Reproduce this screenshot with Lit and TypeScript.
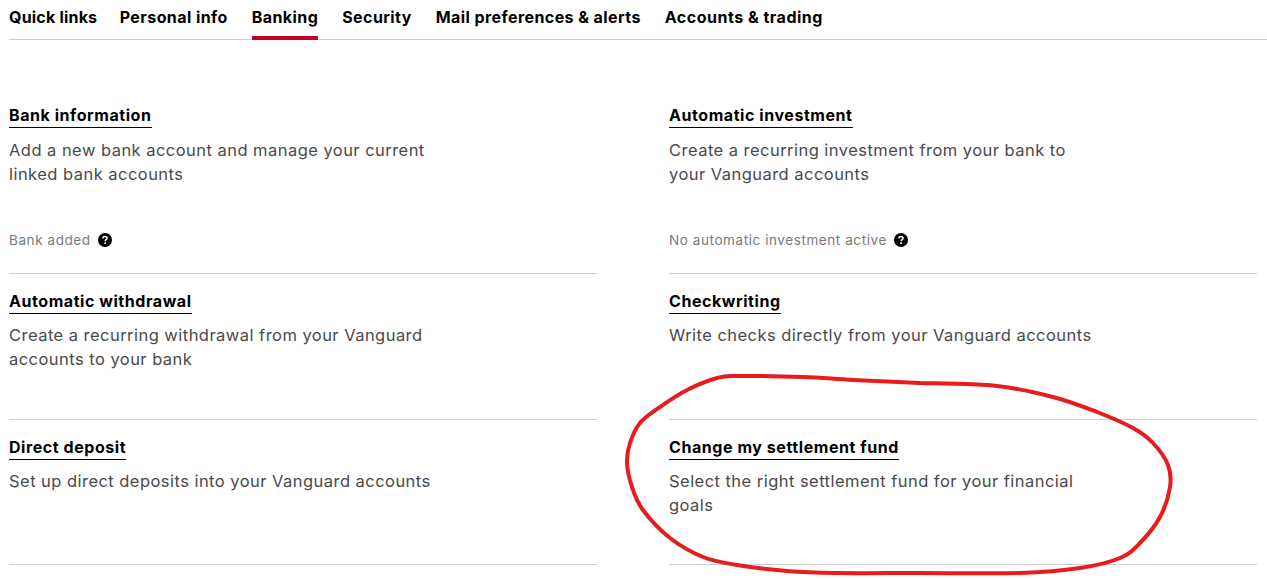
import { LitElement, html, css, svg } from "lit";
import { customElement } from "lit/decorators.js";

const TABS = ["Quick links", "Personal info", "Banking", "Security", "Mail preferences & alerts", "Accounts & trading"];

interface Card { title: string; lines: string[]; status?: string; }
const CARDS: Card[] = [
  { title: "Bank information", lines: ["Add a new bank account and manage your current", "linked bank accounts"], status: "Bank added" },
  { title: "Automatic investment", lines: ["Create a recurring investment from your bank to", "your Vanguard accounts"], status: "No automatic investment active" },
  { title: "Automatic withdrawal", lines: ["Create a recurring withdrawal from your Vanguard", "accounts to your bank"] },
  { title: "Checkwriting", lines: ["Write checks directly from your Vanguard accounts"] },
  { title: "Direct deposit", lines: ["Set up direct deposits into your Vanguard accounts"] },
  { title: "Change my settlement fund", lines: ["Select the right settlement fund for your financial", "goals"] },
];

const PTS: [number, number][] = [
  [920,383],[853,380],[803,377],[737,376],[717,378],[687,390],[660,407],[640,423],[630,443],[627,463],[632,487],[643,510],[670,538],[703,557],[737,565],[787,571],[837,573],[920,573],[1020,573],[1080,568],[1120,558],[1140,543],[1160,517],[1170,487],[1168,465],[1153,443],[1133,428],[1097,412],[1053,397],[997,386],[920,383],
];
function smooth(p: [number, number][]) {
  let d = `M${p[0][0]} ${p[0][1]}`;
  for (let i = 0; i < p.length - 1; i++) {
    const a = p[Math.max(0, i - 1)], b = p[i], c = p[i + 1], e = p[Math.min(p.length - 1, i + 2)];
    d += `C${b[0] + (c[0] - a[0]) / 6} ${b[1] + (c[1] - a[1]) / 6} ${c[0] - (e[0] - b[0]) / 6} ${c[1] - (e[1] - b[1]) / 6} ${c[0]} ${c[1]}`;
  }
  return d;
}

@customElement("app-root")
export class AppRoot extends LitElement {
  static styles = css`
    :host { display: block; position: relative; width: 1267px; height: 579px; overflow: hidden; background: #fff; font-family: "Inter", "Liberation Sans", sans-serif; color: #000; }
    .tabs { display: flex; gap: 24px; margin-left: 9px; height: 40px; box-sizing: border-box; border-bottom: 1px solid #cfcfcf; }
    .tab { height: 40px; box-sizing: border-box; padding-top: 7px; font-size: 16px; line-height: 20px; font-weight: 700; letter-spacing: 0.42px; white-space: nowrap; }
    .tab:first-child { letter-spacing: 0.2px; margin-right: -1.6px; }
    .tab:last-child { letter-spacing: 0.5px; }
    .tab.on { border-bottom: 4px solid #c20029; }
    .grid { display: grid; grid-template-columns: 588px 588px; column-gap: 72px; margin: 61px 0 0 9px; grid-template-rows: 173px 146px 145px; }
    .card { box-sizing: border-box; border-bottom: 1px solid #cfcfcf; display: flex; flex-direction: column; align-items: flex-start; padding-top: 17px; }
    .card.first { padding-top: 4px; }
    .title { font-size: 16px; line-height: 20px; font-weight: 700; letter-spacing: 0.56px; padding-bottom: 2px; border-bottom: 1px solid #000; white-space: nowrap; }
    .desc { margin-top: 9px; font-size: 16.5px; line-height: 24px; font-weight: 400; color: #4a4a4a; letter-spacing: 0.46px; white-space: nowrap; }
    .card.first .desc { margin-top: 10px; }
    .status { display: flex; align-items: center; gap: 7.5px; margin-top: 45px; font-size: 13.5px; line-height: 18px; color: #7a7a7a; letter-spacing: 0.58px; }
    .help { width: 14px; height: 14px; display: block; }
    .ink { position: absolute; left: 0; top: 0; pointer-events: none; }
  `;

  render() {
    return html`
      <div class="tabs">
        ${TABS.map((t) => html`<div class="tab ${t === "Banking" ? "on" : ""}">${t}</div>`)}
      </div>
      <div class="grid">
        ${CARDS.map((c, i) => html`
          <div class="card ${i < 2 ? "first" : ""}">
            <div class="title">${c.title}</div>
            <div class="desc">${c.lines.map((l) => html`<div>${l}</div>`)}</div>
            ${c.status ? html`<div class="status">${c.status}
              <svg class="help" viewBox="0 0 14 14">
                <circle cx="7" cy="7" r="7" fill="#000"></circle>
                <path d="M4.9 5.4C4.9 4.2 5.8 3.5 7 3.5S9.1 4.2 9.1 5.3C9.1 6.6 7.1 6.8 7.1 8.2" fill="none" stroke="#fff" stroke-width="1.5"></path>
                <circle cx="7.1" cy="10.2" r="0.95" fill="#fff"></circle>
              </svg></div>` : ""}
          </div>`)}
      </div>
      <svg class="ink" width="1267" height="579" viewBox="0 0 1267 579">
        ${svg`<path d=${smooth(PTS)} fill="none" stroke="#e81c1c" stroke-width="4" stroke-linecap="round" stroke-linejoin="round"></path>`}
      </svg>
    `;
  }
}
